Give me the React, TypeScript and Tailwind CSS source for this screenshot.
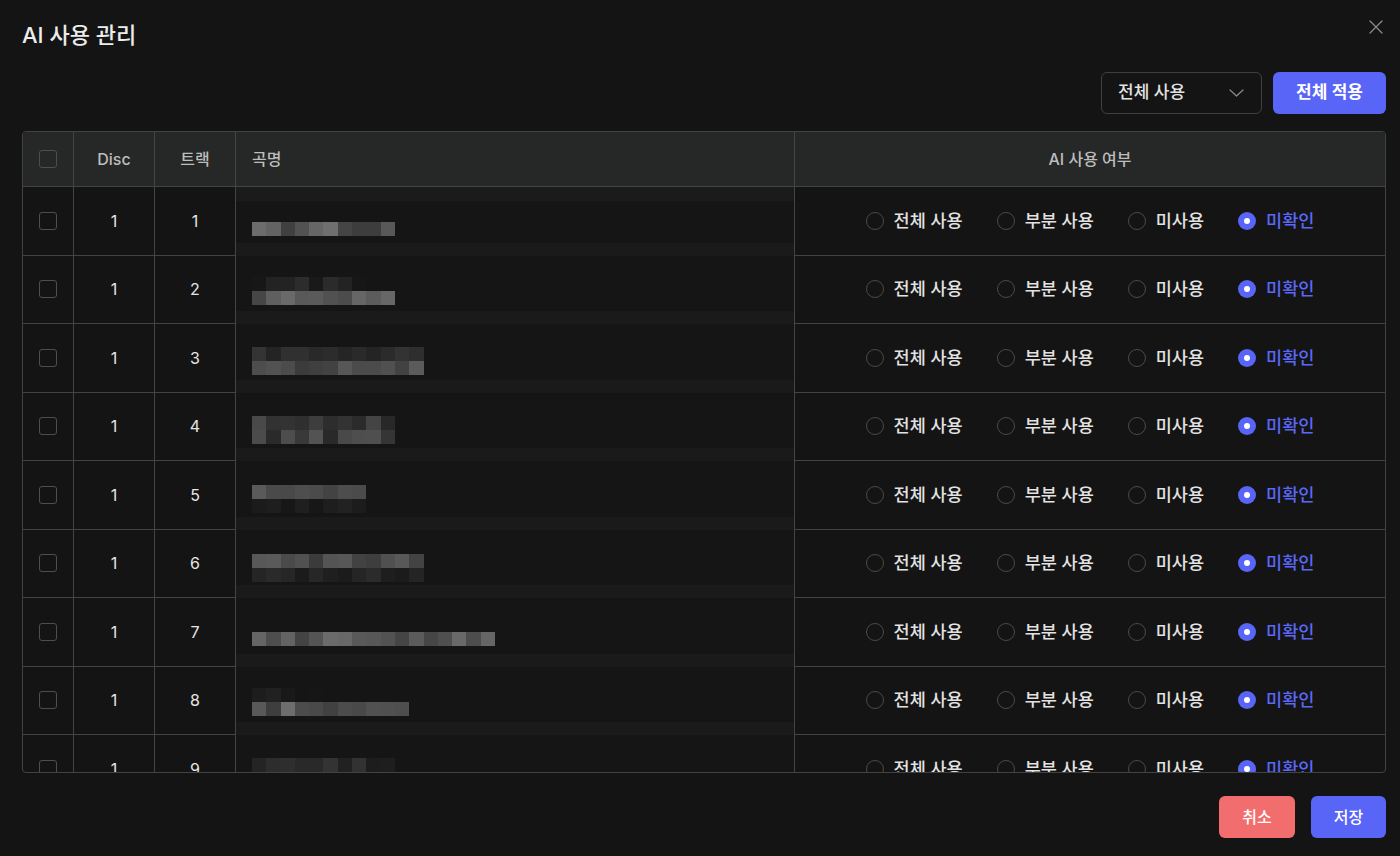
const FONT = { fontFamily: 'Inter, "Noto Sans CJK KR", sans-serif' };

const OPTIONS = ['전체 사용', '부분 사용', '미사용', '미확인'];

// λ¨μμ΄ν¬ μ²λ¦¬λ κ³΅λ… (μ¤„λ³„ λΈ”λ΅ κ°μμ™€ λ°κΈ° λ²”μ„)
const ROWS = [
  { track: 1, pt: 'pt-[28px]', lines: [{ n: 10, lo: 60, hi: 112 }] },
  { track: 2, pt: 'pt-[15px]', lines: [{ n: 8, lo: 22, hi: 46 }, { n: 10, lo: 62, hi: 112 }] },
  { track: 3, pt: 'pt-[18px]', lines: [{ n: 12, lo: 30, hi: 56 }, { n: 12, lo: 56, hi: 96 }] },
  { track: 4, pt: 'pt-[19px]', lines: [{ n: 10, lo: 40, hi: 80 }, { n: 10, lo: 40, hi: 100 }] },
  { track: 5, pt: 'pt-[21px]', lines: [{ n: 8, lo: 50, hi: 92 }, { n: 8, lo: 22, hi: 44 }] },
  { track: 6, pt: 'pt-[22px]', lines: [{ n: 12, lo: 52, hi: 92 }, { n: 12, lo: 24, hi: 44 }] },
  { track: 7, pt: 'pt-[27px]', lines: [{ n: 17, lo: 62, hi: 110 }] },
  { track: 8, pt: 'pt-[15px]', lines: [{ n: 5, lo: 20, hi: 34 }, { n: 11, lo: 62, hi: 112 }] },
  { track: 9, pt: 'pt-[18px]', lines: [{ n: 10, lo: 24, hi: 52 }, { n: 10, lo: 54, hi: 100 }] },
];

function shade(seed: number, i: number, lo: number, hi: number) {
  const r = Math.abs(Math.sin(seed * 97.13 + i * 12.9898) * 43758.5453) % 1;
  const v = Math.round(lo + r * (hi - lo));
  return `rgb(${v},${v},${v})`;
}

function Checkbox() {
  return <span className="block w-[18px] h-[18px] rounded-[3px] border-[1.5px] border-[#4e4e4e]" />;
}

function Radio({ checked, label }: { checked: boolean; label: string }) {
  return (
    <label className="flex items-center gap-[10px]">
      {checked ? (
        <span className="flex items-center justify-center w-[18px] h-[18px] rounded-full bg-[#5865f6]">
          <span className="w-[6px] h-[6px] rounded-full bg-white" />
        </span>
      ) : (
        <span className="w-[18px] h-[18px] rounded-full border-[1.5px] border-[#4a4a4a]" />
      )}
      <span className={`text-[17.5px] font-medium ${checked ? 'text-[#5b68f7]' : 'text-[#e2e2e2]'}`}>{label}</span>
    </label>
  );
}

function NameMosaic({ row, index }: { row: (typeof ROWS)[number]; index: number }) {
  return (
    <div className={`flex flex-col pl-4 ${row.pt}`}>
      {row.lines.map((line, li) => (
        <div key={li} className="flex h-[14px]">
          {Array.from({ length: line.n }).map((_, i) => (
            <span
              key={i}
              className="w-[14.3px] h-[14px]"
              style={{ backgroundColor: shade(index + 1, i + li * 31, line.lo, line.hi) }}
            />
          ))}
        </div>
      ))}
    </div>
  );
}

export default function App() {
  return (
    <div className="w-[1400px] h-[856px] bg-[#141414] pl-[22px] pr-[14px] overflow-hidden" style={FONT}>
      {/* νƒ€μ΄ν€ */}
      <div className="flex justify-between items-start pt-[20px]">
        <h1 className="text-[22px] leading-[30px] font-medium text-[#ececec]">AI 사용 관리</h1>
        <button className="mt-[0px] mr-[3px] text-[#8a8a8a]">
          <svg width="14" height="14" viewBox="0 0 14 14" fill="none" stroke="currentColor" strokeWidth="1.3" strokeLinecap="round">
            <path d="M1 1L13 13M13 1L1 13" />
          </svg>
        </button>
      </div>

      {/* μΌκ΄„ μ μ© */}
      <div className="flex justify-end gap-[11px] mt-[22px]">
        <div className="flex items-center justify-between w-[161px] h-[42px] pl-4 pr-[17px] rounded-[6px] border border-[#3f3f3f] bg-[#141414]">
          <span className="text-[17px] font-medium text-[#e2e2e2]">전체 사용</span>
          <svg width="15" height="8" viewBox="0 0 15 8" fill="none" stroke="#8a8a8a" strokeWidth="1.2" strokeLinecap="round" strokeLinejoin="round">
            <path d="M1 1L7.5 7L14 1" />
          </svg>
        </div>
        <button className="w-[113px] h-[42px] rounded-[6px] bg-[#5865f6] text-[17px] font-semibold text-white">
          전체 적용
        </button>
      </div>

      {/* ν…μ΄λΈ” */}
      <div className="mt-[17px] h-[642px] rounded-[4px] border border-[#424242] overflow-hidden">
        <div className="grid grid-cols-[51px_81px_81px_559px_1fr] h-[55px] bg-[#262727] text-[16px] font-medium text-[#bdbdbd] border-b border-[#444]">
          <div className="flex items-center justify-center border-r border-[#444]">
            <Checkbox />
          </div>
          <div className="flex items-center justify-center border-r border-[#444]">Disc</div>
          <div className="flex items-center justify-center border-r border-[#444]">트랙</div>
          <div className="flex items-center pl-4 border-r border-[#444]">곡명</div>
          <div className="flex items-center justify-center">AI 사용 여부</div>
        </div>

        {ROWS.map((row, idx) => (
          <div
            key={row.track}
            className="grid grid-cols-[51px_81px_81px_559px_1fr] h-[68.5px] shrink-0 text-[16px] text-[#e6e6e6]"
          >
            <div className="flex items-center justify-center border-r border-b border-[#444]">
              <Checkbox />
            </div>
            <div className="flex items-center justify-center border-r border-b border-[#444]">1</div>
            <div className="flex items-center justify-center border-r border-b border-[#444]">{row.track}</div>
            <div className="flex flex-col justify-between border-r border-[#444] bg-[#151515]">
              <div className={idx === 0 ? 'h-[14px] bg-[#1b1b1b] -mb-[14px]' : 'h-0'} />
              <NameMosaic row={row} index={idx} />
              <div className="h-[13px] bg-[#1a1a1a]" />
            </div>
            <div className="flex items-center justify-center gap-[34px] border-b border-[#444]">
              {OPTIONS.map((opt) => (
                <Radio key={opt} label={opt} checked={opt === '미확인'} />
              ))}
            </div>
          </div>
        ))}
      </div>

      {/* ν•λ‹¨ λ²„νΌ */}
      <div className="flex justify-end gap-4 mt-[23px]">
        <button className="w-[76px] h-[42px] rounded-[6px] bg-[#f26e6e] text-[16px] font-medium text-white">취소</button>
        <button className="w-[75px] h-[42px] rounded-[6px] bg-[#5865f6] text-[16px] font-medium text-white">저장</button>
      </div>
    </div>
  );
}
